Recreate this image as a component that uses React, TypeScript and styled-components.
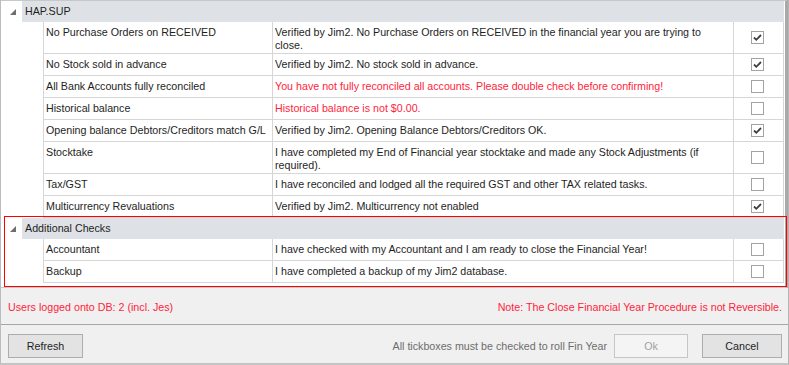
import React from "react";
import styled, { createGlobalStyle } from "styled-components";

type Check = {
  label: string;
  note: string;
  warn?: boolean;
  checked?: boolean;
};

const groups: { title: string; items: Check[] }[] = [
  {
    title: "HAP.SUP",
    items: [
      {
        label: "No Purchase Orders on RECEIVED",
        note: "Verified by Jim2. No Purchase Orders on RECEIVED in the financial year you are trying to close.",
        checked: true,
      },
      { label: "No Stock sold in advance", note: "Verified by Jim2. No stock sold in advance.", checked: true },
      {
        label: "All Bank Accounts fully reconciled",
        note: "You have not fully reconciled all accounts. Please double check before confirming!",
        warn: true,
      },
      { label: "Historical balance", note: "Historical balance is not $0.00.", warn: true },
      {
        label: "Opening balance Debtors/Creditors match G/L",
        note: "Verified by Jim2. Opening Balance Debtors/Creditors OK.",
        checked: true,
      },
      {
        label: "Stocktake",
        note: "I have completed my End of Financial year stocktake and made any Stock Adjustments (if required).",
      },
      { label: "Tax/GST", note: "I have reconciled and lodged all the required GST and other TAX related tasks." },
      { label: "Multicurrency Revaluations", note: "Verified by Jim2. Multicurrency not enabled", checked: true },
    ],
  },
  {
    title: "Additional Checks",
    items: [
      { label: "Accountant", note: "I have checked with my Accountant and I am ready to close the Financial Year!" },
      { label: "Backup", note: "I have completed a backup of my Jim2 database." },
    ],
  },
];

const GlobalStyle = createGlobalStyle`
  body {
    margin: 0;
    background: #f0f0f0;
  }
`;

const Window = styled.div`
  position: relative;
  width: 789px;
  height: 365px;
  box-sizing: border-box;
  background: #f0f0f0;
  border-left: 1px solid #bcbcbc;
  border-right: 1px solid #b4b4b4;
  border-bottom: 2px solid #c4c4c4;
  font-family: "Liberation Sans", Arial, sans-serif;
  font-size: 10.7px;
  color: #1e1e1e;
  display: flex;
  flex-direction: column;
`;

const Grid = styled.div`
  height: 288px;
  flex-shrink: 0;
  box-sizing: border-box;
  background: #fff;
  border-top: 1px solid #c8c8c8;
  border-bottom: 1px solid #c8c8c8;
  border-right: 3px solid #a9a9a9;
  display: grid;
  grid-template-columns: 21px 22px 229px 461px 50px 1px;
  align-content: start;
  overflow: hidden;
`;

const Expander = styled.div`
  grid-column: 1;
  display: flex;
  align-items: center;
  justify-content: center;
  padding-left: 2px;
`;

const GroupHeader = styled.div`
  grid-column: 2 / 6;
  height: 21px;
  line-height: 21px;
  padding-left: 3px;
  background: #dee1e5;
`;

const Indent = styled.div`
  grid-column: 2;
  border-right: 1px solid #d6d6d6;
`;

const Spacer = styled.div<{ $col: number }>`
  grid-column: ${({ $col }) => $col};
`;

const Cell = styled.div<{ $warn?: boolean; $nowrap?: boolean }>`
  min-height: 22px;
  box-sizing: border-box;
  padding: 4px 2px 1px 2px;
  line-height: 13px;
  border-right: 1px solid #d6d6d6;
  border-bottom: 1px solid #d6d6d6;
  white-space: ${({ $nowrap }) => ($nowrap ? "nowrap" : "normal")};
  overflow: hidden;
  color: ${({ $warn }) => ($warn ? "#ff1e3c" : "#1e1e1e")};
`;

const CheckCell = styled.div`
  border-right: 1px solid #d6d6d6;
  border-bottom: 1px solid #d6d6d6;
  display: flex;
  align-items: center;
  justify-content: center;
  padding-right: 2px;
`;

const Box = styled.span`
  width: 13px;
  height: 13px;
  box-sizing: border-box;
  border: 1px solid #a3a3a3;
  background: #fff;
  display: flex;
  align-items: center;
  justify-content: center;
`;

const Marker = styled.div`
  position: absolute;
  left: 3px;
  top: 216px;
  width: 783px;
  height: 71px;
  box-sizing: border-box;
  border: 1px solid #f00;
  pointer-events: none;
`;

const Notes = styled.div`
  height: 37px;
  flex-shrink: 0;
  display: flex;
  align-items: center;
  justify-content: space-between;
  padding: 2px 6px 0 7px;
  box-sizing: border-box;
  color: #ff1e3c;
  border-bottom: 1px solid #a6a6a6;
`;

const Actions = styled.div`
  height: 37px;
  box-sizing: border-box;
  display: flex;
  align-items: flex-start;
  padding: 9px 6px 0 7px;
  gap: 7px;
`;

const Hint = styled.span`
  margin-left: auto;
  line-height: 24px;
  color: #6d6d6d;
`;

const Button = styled.button<{ $w: number }>`
  width: ${({ $w }) => $w}px;
  height: 24px;
  box-sizing: border-box;
  font: inherit;
  color: ${({ disabled }) => (disabled ? "#a2a2a2" : "#1e1e1e")};
  background: ${({ disabled }) => (disabled ? "#f4f4f4" : "#e3e3e3")};
  border: 1px solid ${({ disabled }) => (disabled ? "#c6c6c6" : "#adadad")};
  padding: 0;
  & + & {
    margin-left: 7px;
  }
`;

const Triangle = () => (
  <svg width="6" height="6" viewBox="0 0 6 6">
    <polygon points="6,0 6,6 0,6" fill="#6e6e6e" />
  </svg>
);

const Tick = ({ on }: { on?: boolean }) => (
  <Box>
    {on && (
      <svg width="11" height="11" viewBox="0 0 11 11">
        <path d="M2 5.5 L4.3 7.8 L9 3" stroke="#3f3f3f" strokeWidth="1.8" fill="none" />
      </svg>
    )}
  </Box>
);

export default function App() {
  return (
    <Window>
      <GlobalStyle />
      <Grid>
        {groups.map((g) => (
          <React.Fragment key={g.title}>
            <Expander>
              <Triangle />
            </Expander>
            <GroupHeader>{g.title}</GroupHeader>
            <Spacer $col={6} />
            {g.items.map((it) => (
              <React.Fragment key={it.label}>
                <Spacer $col={1} />
                <Indent />
                <Cell $nowrap>{it.label}</Cell>
                <Cell $warn={it.warn}>{it.note}</Cell>
                <CheckCell>
                  <Tick on={it.checked} />
                </CheckCell>
                <Spacer $col={6} />
              </React.Fragment>
            ))}
          </React.Fragment>
        ))}
      </Grid>
      <Marker />
      <Notes>
        <span>Users logged onto DB: 2 (incl. Jes)</span>
        <span>Note: The Close Financial Year Procedure is not Reversible.</span>
      </Notes>
      <Actions>
        <Button $w={75}>Refresh</Button>
        <Hint>All tickboxes must be checked to roll Fin Year</Hint>
        <Button $w={74} disabled>
          Ok
        </Button>
        <Button $w={80}>Cancel</Button>
      </Actions>
    </Window>
  );
}
